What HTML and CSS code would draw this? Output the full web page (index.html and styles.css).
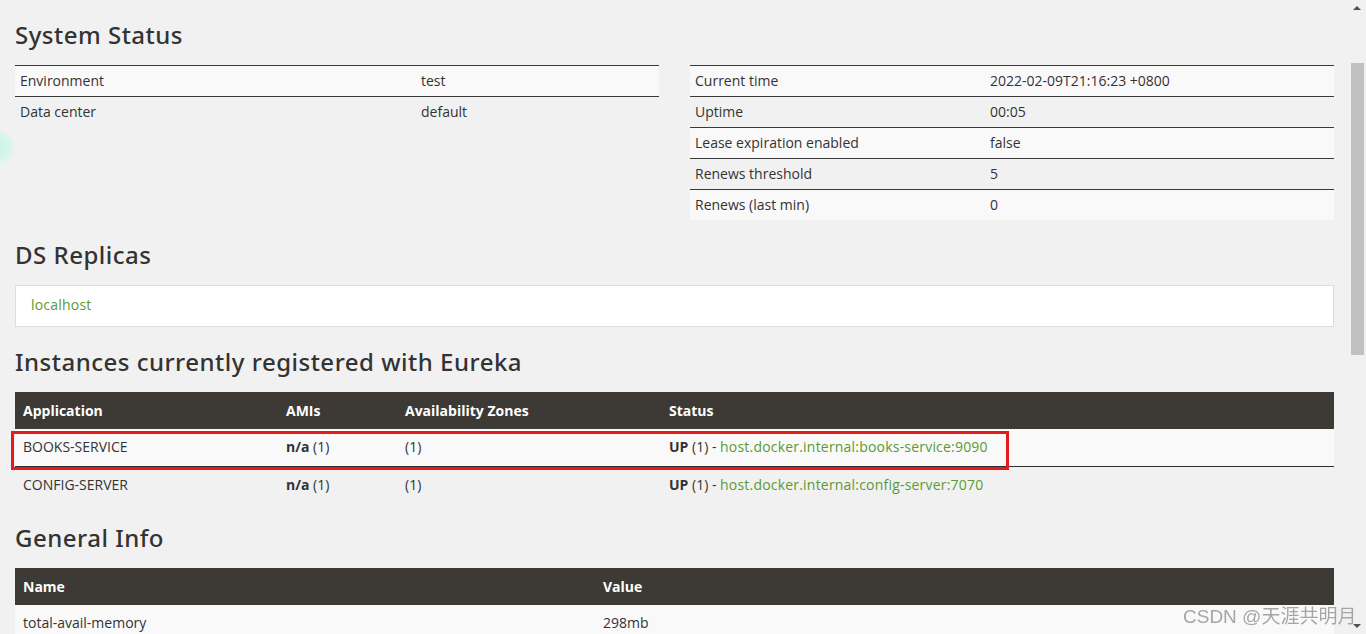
FILE: index.html
```html
<!DOCTYPE html>
<html lang="en">
<head>
  <meta charset="UTF-8">
  <title>Eureka</title>
  <link rel="stylesheet" href="styles.css">
</head>
<body>
  <div class="page">
    <h1>System Status</h1>
    <div class="status-row">
      <table class="kv left-kv">
        <tr><td class="k">Environment</td><td>test</td></tr>
        <tr><td class="k">Data center</td><td>default</td></tr>
      </table>
      <table class="kv right-kv">
        <tr><td class="k">Current time</td><td>2022-02-09T21:16:23 +0800</td></tr>
        <tr><td class="k">Uptime</td><td>00:05</td></tr>
        <tr><td class="k">Lease expiration enabled</td><td>false</td></tr>
        <tr><td class="k">Renews threshold</td><td>5</td></tr>
        <tr><td class="k">Renews (last min)</td><td>0</td></tr>
      </table>
    </div>

    <h1>DS Replicas</h1>
    <div class="replicas">
      <a href="#">localhost</a>
    </div>

    <h1>Instances currently registered with Eureka</h1>
    <div class="instances-wrap">
      <table class="grid instances">
        <thead>
          <tr>
            <th class="c-app">Application</th>
            <th class="c-ami">AMIs</th>
            <th class="c-zone">Availability Zones</th>
            <th>Status</th>
          </tr>
        </thead>
        <tbody>
          <tr>
            <td>BOOKS-SERVICE</td>
            <td><b>n/a</b> (1)</td>
            <td>(1)</td>
            <td><b>UP</b> (1) - <a href="#">host.docker.internal:books-service:9090</a></td>
          </tr>
          <tr>
            <td>CONFIG-SERVER</td>
            <td><b>n/a</b> (1)</td>
            <td>(1)</td>
            <td><b>UP</b> (1) - <a href="#">host.docker.internal:config-server:7070</a></td>
          </tr>
        </tbody>
      </table>
      <div class="highlight"></div>
    </div>

    <h1>General Info</h1>
    <table class="grid general">
      <thead>
        <tr><th class="c-name">Name</th><th>Value</th></tr>
      </thead>
      <tbody>
        <tr><td>total-avail-memory</td><td>298mb</td></tr>
      </tbody>
    </table>
  </div>

  <!-- overlays -->
  <div class="bubble"></div>
  <div class="scrollbar">
    <span class="arrow up"></span>
    <span class="thumb"></span>
    <span class="arrow down"></span>
  </div>
  <div class="watermark">CSDN @天涯共明月</div>
</body>
</html>
```

FILE: styles.css
```css
html, body {
  margin: 0;
  height: 100%;
  overflow: hidden;
}

body {
  background: #f1f1f1;
  color: #333;
  font-family: "Open Sans", "Noto Sans", sans-serif;
  font-size: 14px;
}

.page {
  padding: 0 32px 0 15px;
}

h1 {
  font-family: "Noto Sans", sans-serif;
  font-weight: 500;
  font-size: 24px;
  letter-spacing: 0.5px;
  line-height: 30px;
  margin: 20px 0 15px;
  color: #333;
}

a {
  color: #5b9a34;
  text-decoration: none;
  letter-spacing: 0.2px;
}

table {
  border-collapse: collapse;
  width: 100%;
}

/* system status */
.status-row {
  display: flex;
  gap: 31px;
  align-items: flex-start;
}

.kv {
  flex: 1;
  width: auto;
}

.kv td {
  border-top: 1px solid #3a3a3a;
  padding: 5px 5px;
  line-height: 20px;
}

.kv tr:nth-child(odd) td {
  background: #f9f9f9;
}

.left-kv .k {
  width: 391px;
}

.right-kv .k {
  width: 285px;
}

/* replicas */
.replicas {
  background: #fff;
  border: 1px solid #ddd;
  padding: 9px 15px 11px;
  line-height: 20px;
}

/* dark header tables */
.grid th {
  background: #3d3934;
  color: #fff;
  text-align: left;
  font-weight: 700;
  padding: 8px 8px;
  line-height: 21px;
}

.grid td {
  padding: 8px 8px;
  line-height: 20px;
  border-top: 1px solid #2f2f2f;
}

.grid tbody tr:first-child td {
  border-top: none;
  padding-top: 8px;
  padding-bottom: 9px;
}

.grid tbody tr:nth-child(odd) td {
  background: #f9f9f9;
}

.grid b {
  font-weight: 700;
}

.c-app { width: 247px; }
.c-ami { width: 103px; }
.c-zone { width: 248px; }
.c-name { width: 564px; }

.instances-wrap {
  position: relative;
}

.highlight {
  position: absolute;
  left: -4px;
  top: 39px;
  width: 992px;
  height: 33px;
  border: 3px solid #e21b1b;
}

/* overlays */
.bubble {
  position: fixed;
  left: -20px;
  top: 130px;
  width: 34px;
  height: 34px;
  border-radius: 50%;
  background: radial-gradient(circle, #c8f2e4 0%, #d9f6ec 55%, rgba(240, 250, 246, 0) 100%);
}

.scrollbar {
  position: fixed;
  top: 0;
  right: 0;
  width: 17px;
  height: 100%;
  background: #f1f1f1;
}

.thumb {
  position: absolute;
  left: 2px;
  top: 63px;
  width: 13px;
  height: 292px;
  background: #c1c1c1;
}

.arrow {
  position: absolute;
  left: 4px;
  width: 0;
  height: 0;
  border-left: 4px solid transparent;
  border-right: 4px solid transparent;
}

.arrow.up {
  top: 6px;
  border-bottom: 4px solid #505050;
}

.arrow.down {
  bottom: 6px;
  border-top: 4px solid #505050;
}

.watermark {
  position: fixed;
  left: 1183px;
  top: 601px;
  font-family: "Liberation Sans", "Noto Sans CJK SC", sans-serif;
  font-size: 19px;
  color: #a5a5a5;
  text-shadow: 0 0 1px #fff;
  white-space: nowrap;
}
```
